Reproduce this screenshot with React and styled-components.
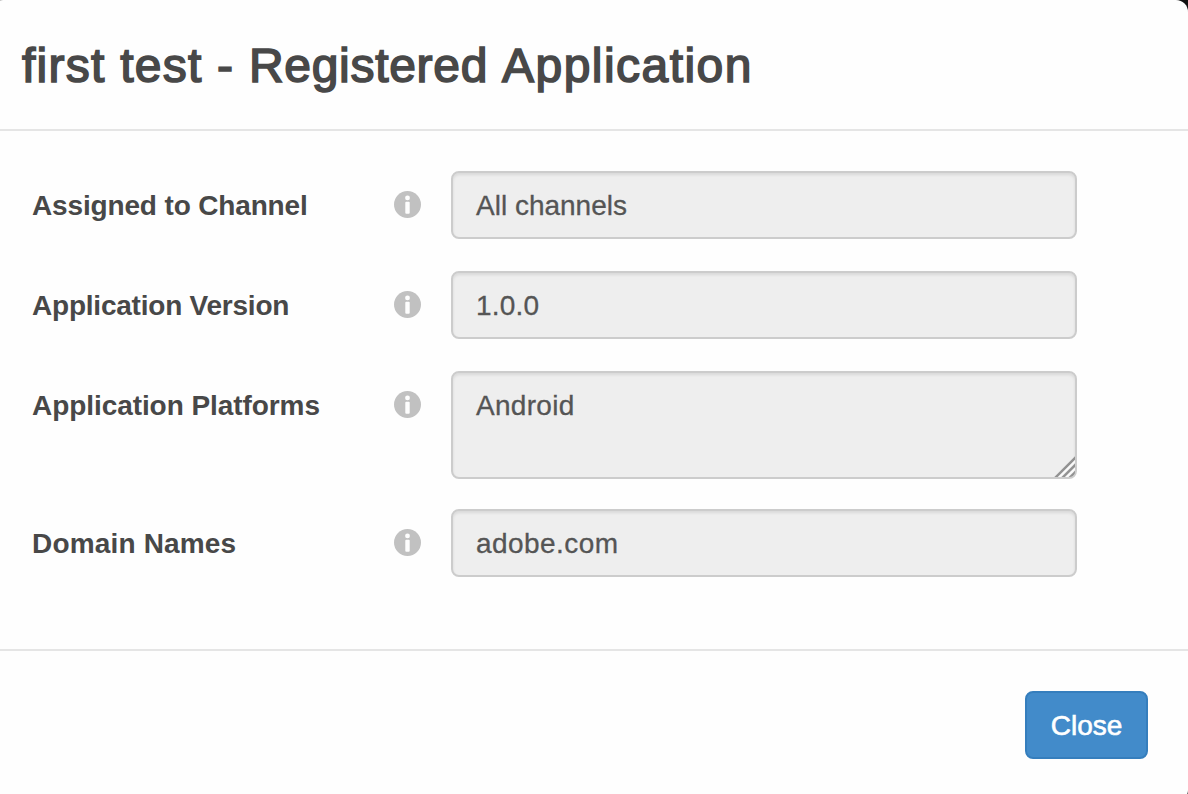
import React from "react";
import styled, { createGlobalStyle } from "styled-components";

const GlobalStyle = createGlobalStyle`
  *, *::before, *::after { box-sizing: border-box; }
  html, body, #root { height: 100%; }
  body {
    margin: 0;
    overflow: hidden;
    background: #111;
    font-family: "Liberation Sans", Arial, sans-serif;
  }
`;

const Dialog = styled.section`
  display: flex;
  flex-direction: column;
  width: 1197px;
  height: 802px;
  margin-left: -9px;
  padding-left: 9px;
  background: #fefefe;
  border-radius: 12px;
`;

const Header = styled.header`
  flex: none;
  height: 131px;
  padding: 38px 22px 0;
  border-bottom: 2px solid #e5e5e5;
`;

const Title = styled.h1`
  margin: 0;
  font-size: 48px;
  line-height: 56px;
  font-weight: 400;
  color: #484848;
  white-space: nowrap;
  -webkit-text-stroke: 1.6px #484848;
`;

const TitlePart = styled.span`
  letter-spacing: ${(p) => p.$spacing}px;
`;

const Body = styled.main`
  flex: none;
  display: flex;
  flex-direction: column;
  height: 520px;
  padding: 40px 0 0 32px;
  border-bottom: 2px solid #e5e5e5;
`;

const Row = styled.div`
  display: grid;
  grid-template-columns: 362px 57px 626px;
  align-items: start;
  margin-bottom: ${(p) => p.$gap}px;
`;

const Label = styled.label`
  height: 68px;
  padding-top: 1px;
  font-size: 28px;
  line-height: 68px;
  font-weight: 700;
  color: #484848;
  white-space: nowrap;
  letter-spacing: ${(p) => p.$spacing}px;
`;

const Info = styled.svg`
  display: block;
  width: 27px;
  height: 27px;
  margin-top: 20px;
`;

const Field = styled.div`
  position: relative;
  height: ${(p) => (p.$tall ? 108 : 68)}px;
  padding: 13px 23px 11px;
  border: 2px solid #ccc;
  border-radius: 8px;
  background: #eee;
  box-shadow: inset 0 2px 3px rgba(0, 0, 0, 0.09);
  font-size: 28px;
  line-height: 40px;
  color: #555;
  white-space: nowrap;
  letter-spacing: ${(p) => p.$spacing}px;
  -webkit-text-stroke: 0.3px #555;
`;

const Grip = styled.svg`
  position: absolute;
  right: 0;
  bottom: 0;
  width: 22px;
  height: 22px;
  border-bottom-right-radius: 5px;
`;

const Footer = styled.footer`
  display: flex;
  justify-content: flex-end;
  padding: 40px 40px 0 0;
`;

const Button = styled.button`
  width: 123px;
  height: 68px;
  padding: 2px 0 0;
  border: 2px solid #357ebd;
  border-radius: 8px;
  background: #428bca;
  color: #fff;
  font: 400 28px/40px "Liberation Sans", Arial, sans-serif;
  -webkit-text-stroke: 0.6px #fff;
`;

const fields = [
  { label: "Assigned to Channel", value: "All channels", gap: 32, ls: -0.15, vs: 0 },
  { label: "Application Version", value: "1.0.0", gap: 32, ls: -0.22, vs: 0.2 },
  { label: "Application Platforms", value: "Android", gap: 30, ls: -0.07, vs: 0.3, tall: true },
  { label: "Domain Names", value: "adobe.com", gap: 0, ls: 0.17, vs: 0.45 },
];

function InfoIcon() {
  return (
    <Info viewBox="0 0 27 27" aria-hidden="true">
      <circle cx="13.5" cy="13.5" r="13.5" fill="#c1c1c1" />
      <circle cx="13.5" cy="6.9" r="2.4" fill="#fefefe" />
      <rect x="11.3" y="10.8" width="4.4" height="12" rx="1" fill="#fefefe" />
    </Info>
  );
}

function ResizeGrip() {
  return (
    <Grip viewBox="0 0 22 22" aria-hidden="true" fill="none">
      <path d="M5.2 23 23 5.2M12.4 23 23 12.4M19.6 23 23 19.6" stroke="#fafafa" strokeWidth="2" />
      <path d="M2 23 23 2M9.2 23 23 9.2M16.4 23 23 16.4" stroke="#929292" strokeWidth="2.4" />
    </Grip>
  );
}

export default function App() {
  return (
    <>
      <GlobalStyle />
      <Dialog>
        <Header>
          <Title>
            <TitlePart $spacing={1.25}>first test - </TitlePart>
            <TitlePart $spacing={0.7}>Registered </TitlePart>
            <TitlePart $spacing={1.45}>Application</TitlePart>
          </Title>
        </Header>
        <Body>
          {fields.map((f) => (
            <Row key={f.label} $gap={f.gap}>
              <Label $spacing={f.ls}>{f.label}</Label>
              <InfoIcon />
              <Field $tall={f.tall} $spacing={f.vs}>
                {f.value}
                {f.tall && <ResizeGrip />}
              </Field>
            </Row>
          ))}
        </Body>
        <Footer>
          <Button type="button">Close</Button>
        </Footer>
      </Dialog>
    </>
  );
}
